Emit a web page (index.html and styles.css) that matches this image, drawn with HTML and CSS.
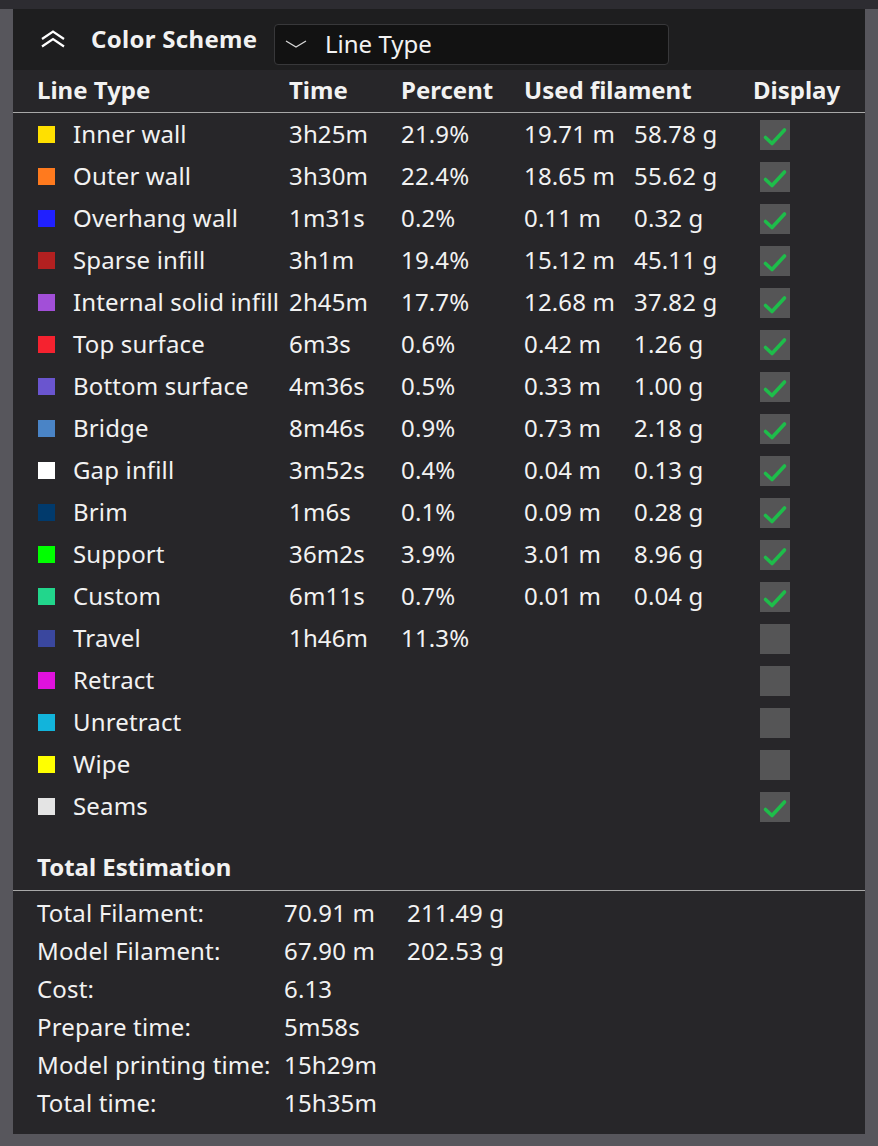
FILE: index.html
```html
<!DOCTYPE html>
<html>
<head>
<meta charset="utf-8">
<link rel="stylesheet" href="styles.css">
</head>
<body>
<div class="topstrip"></div>
<div class="panel">
  <div class="titlebar">
    <svg class="collapse" width="26" height="18" viewBox="0 0 26 18">
      <path d="M2 9 L13 1.5 L24 9 M2 16.5 L13 9 L24 16.5" fill="none" stroke="#fff" stroke-width="2.2" stroke-linejoin="miter"/>
    </svg>
    <span class="title">Color Scheme</span>
    <div class="dropdown">
      <svg class="dd-arrow" width="22" height="8" viewBox="0 0 22 8">
        <path d="M1 1 L11 7 L21 1" fill="none" stroke="#d8d8d8" stroke-width="1.3"/>
      </svg>
      <span>Line Type</span>
    </div>
  </div>

  <div class="table">
    <div class="thead">
      <div>Line Type</div><div>Time</div><div>Percent</div><div class="span2">Used filament</div><div>Display</div>
    </div>
    <div class="rows">
      <div class="row"><div class="name"><i class="sw" style="background:#ffe000"></i>Inner wall</div><div>3h25m</div><div>21.9%</div><div>19.71 m</div><div>58.78 g</div><div><span class="cb"><svg viewBox="0 0 30 30"><path d="M5.5 17.5 L12 23.5 L24.5 10" /></svg></span></div></div>
      <div class="row"><div class="name"><i class="sw" style="background:#ff7a1e"></i>Outer wall</div><div>3h30m</div><div>22.4%</div><div>18.65 m</div><div>55.62 g</div><div><span class="cb"><svg viewBox="0 0 30 30"><path d="M5.5 17.5 L12 23.5 L24.5 10" /></svg></span></div></div>
      <div class="row"><div class="name"><i class="sw" style="background:#2020ff"></i>Overhang wall</div><div>1m31s</div><div>0.2%</div><div>0.11 m</div><div>0.32 g</div><div><span class="cb"><svg viewBox="0 0 30 30"><path d="M5.5 17.5 L12 23.5 L24.5 10" /></svg></span></div></div>
      <div class="row"><div class="name"><i class="sw" style="background:#b22020"></i>Sparse infill</div><div>3h1m</div><div>19.4%</div><div>15.12 m</div><div>45.11 g</div><div><span class="cb"><svg viewBox="0 0 30 30"><path d="M5.5 17.5 L12 23.5 L24.5 10" /></svg></span></div></div>
      <div class="row"><div class="name"><i class="sw" style="background:#a24fd8"></i>Internal solid infill</div><div>2h45m</div><div>17.7%</div><div>12.68 m</div><div>37.82 g</div><div><span class="cb"><svg viewBox="0 0 30 30"><path d="M5.5 17.5 L12 23.5 L24.5 10" /></svg></span></div></div>
      <div class="row"><div class="name"><i class="sw" style="background:#f5222f"></i>Top surface</div><div>6m3s</div><div>0.6%</div><div>0.42 m</div><div>1.26 g</div><div><span class="cb"><svg viewBox="0 0 30 30"><path d="M5.5 17.5 L12 23.5 L24.5 10" /></svg></span></div></div>
      <div class="row"><div class="name"><i class="sw" style="background:#6a55cf"></i>Bottom surface</div><div>4m36s</div><div>0.5%</div><div>0.33 m</div><div>1.00 g</div><div><span class="cb"><svg viewBox="0 0 30 30"><path d="M5.5 17.5 L12 23.5 L24.5 10" /></svg></span></div></div>
      <div class="row"><div class="name"><i class="sw" style="background:#4a84c6"></i>Bridge</div><div>8m46s</div><div>0.9%</div><div>0.73 m</div><div>2.18 g</div><div><span class="cb"><svg viewBox="0 0 30 30"><path d="M5.5 17.5 L12 23.5 L24.5 10" /></svg></span></div></div>
      <div class="row"><div class="name"><i class="sw" style="background:#ffffff"></i>Gap infill</div><div>3m52s</div><div>0.4%</div><div>0.04 m</div><div>0.13 g</div><div><span class="cb"><svg viewBox="0 0 30 30"><path d="M5.5 17.5 L12 23.5 L24.5 10" /></svg></span></div></div>
      <div class="row"><div class="name"><i class="sw" style="background:#013a6c"></i>Brim</div><div>1m6s</div><div>0.1%</div><div>0.09 m</div><div>0.28 g</div><div><span class="cb"><svg viewBox="0 0 30 30"><path d="M5.5 17.5 L12 23.5 L24.5 10" /></svg></span></div></div>
      <div class="row"><div class="name"><i class="sw" style="background:#00ff00"></i>Support</div><div>36m2s</div><div>3.9%</div><div>3.01 m</div><div>8.96 g</div><div><span class="cb"><svg viewBox="0 0 30 30"><path d="M5.5 17.5 L12 23.5 L24.5 10" /></svg></span></div></div>
      <div class="row"><div class="name"><i class="sw" style="background:#22d68c"></i>Custom</div><div>6m11s</div><div>0.7%</div><div>0.01 m</div><div>0.04 g</div><div><span class="cb"><svg viewBox="0 0 30 30"><path d="M5.5 17.5 L12 23.5 L24.5 10" /></svg></span></div></div>
      <div class="row"><div class="name"><i class="sw" style="background:#3a479e"></i>Travel</div><div>1h46m</div><div>11.3%</div><div></div><div></div><div><span class="cb"></span></div></div>
      <div class="row"><div class="name"><i class="sw" style="background:#e011dd"></i>Retract</div><div></div><div></div><div></div><div></div><div><span class="cb"></span></div></div>
      <div class="row"><div class="name"><i class="sw" style="background:#12b4db"></i>Unretract</div><div></div><div></div><div></div><div></div><div><span class="cb"></span></div></div>
      <div class="row"><div class="name"><i class="sw" style="background:#ffff00"></i>Wipe</div><div></div><div></div><div></div><div></div><div><span class="cb"></span></div></div>
      <div class="row"><div class="name"><i class="sw" style="background:#e4e4e4"></i>Seams</div><div></div><div></div><div></div><div></div><div><span class="cb"><svg viewBox="0 0 30 30"><path d="M5.5 17.5 L12 23.5 L24.5 10" /></svg></span></div></div>
    </div>
  </div>

  <div class="section-title">Total Estimation</div>
  <div class="totals">
    <div class="trow"><div>Total Filament:</div><div>70.91 m</div><div>211.49 g</div></div>
    <div class="trow"><div>Model Filament:</div><div>67.90 m</div><div>202.53 g</div></div>
    <div class="trow"><div>Cost:</div><div>6.13</div><div></div></div>
    <div class="trow"><div>Prepare time:</div><div>5m58s</div><div></div></div>
    <div class="trow"><div>Model printing time:</div><div>15h29m</div><div></div></div>
    <div class="trow"><div>Total time:</div><div>15h35m</div><div></div></div>
  </div>
</div>
</body>
</html>
```
FILE: styles.css
```css
* { box-sizing: border-box; }
html, body { margin: 0; padding: 0; }
body {
  width: 878px;
  height: 1146px;
  background: #57565c;
  font-family: "Noto Sans", "Open Sans", sans-serif;
  color: #f2f2f2;
  overflow: hidden;
}
.topstrip { height: 9px; background: #2d2c31; }
.panel {
  margin: 0 13px;
  height: 1125px;
  background: #272629;
  display: flex;
  flex-direction: column;
}
.titlebar {
  height: 61px;
  background: #1e1e1f;
  display: flex;
  align-items: center;
  padding-left: 27px;
}
.collapse { display: block; margin-top: -2px; }
.title {
  font-weight: 700;
  font-size: 24px;
  margin-left: 25px;
  margin-top: -3px;
  width: 166px;
  white-space: nowrap;
  letter-spacing: 0.3px;
}
.dropdown {
  margin-left: 17px;
  margin-top: 9px;
  width: 395px;
  height: 41px;
  background: #121212;
  border: 1px solid #38383a;
  border-radius: 4px;
  display: flex;
  align-items: center;
  padding-left: 10px;
  padding-bottom: 2px;
  font-size: 24px;
}
.dd-arrow { display: block; margin-right: 18px; margin-top: 2px; }

.table { display: flex; flex-direction: column; }
.thead, .row {
  display: grid;
  grid-template-columns: 252px 112px 123px 110px 119px 112px;
  padding-left: 24px;
}
.thead {
  height: 43px;
  align-items: center;
  font-weight: 700;
  font-size: 24px;
  border-bottom: 1px solid #a8a8a8;
  white-space: nowrap;
  padding-bottom: 4px;
}
.thead .span2 { grid-column: span 2; }
.rows { padding-top: 1px; }
.row {
  height: 42px;
  align-items: center;
  font-size: 24px;
  white-space: nowrap;
  letter-spacing: 0.15px;
  padding-bottom: 3px;
}
.name { display: flex; align-items: center; }
.sw {
  display: inline-block;
  flex: none;
  width: 17px;
  height: 17px;
  margin-left: 1px;
  margin-right: 18px;
  margin-top: 2px;
}
.cb {
  display: block;
  width: 30px;
  height: 30px;
  margin-left: 7px;
  margin-top: 2px;
  background: #555556;
}
.cb svg { display: block; width: 30px; height: 30px; }
.cb path {
  fill: none;
  stroke: #1ebd4a;
  stroke-width: 3.6;
  stroke-linecap: round;
  stroke-linejoin: round;
}
.section-title {
  height: 63px;
  padding: 20px 0 0 24px;
  font-weight: 700;
  font-size: 24px;
  line-height: 38px;
  border-bottom: 1px solid #a8a8a8;
}
.totals { padding-top: 3px; }
.trow {
  display: grid;
  grid-template-columns: 247px 123px 1fr;
  padding-left: 24px;
  height: 38px;
  align-items: center;
  font-size: 24px;
  white-space: nowrap;
  letter-spacing: 0.15px;
  padding-bottom: 2px;
}
```
